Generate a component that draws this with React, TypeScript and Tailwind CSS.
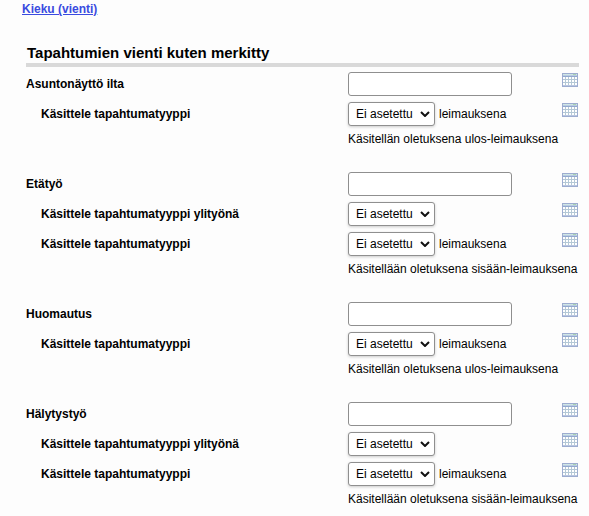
import { useId } from 'react';

type Field = { label: string; suffix?: string };
type Group = { title: string; fields: Field[]; hint: string };

const overtime: Field = { label: 'Käsittele tapahtumatyyppi ylityönä' };
const stamp: Field = { label: 'Käsittele tapahtumatyyppi', suffix: 'leimauksena' };
const hintOut = 'Käsitellän oletuksena ulos-leimauksena';
const hintIn = 'Käsitellään oletuksena sisään-leimauksena';

const groups: Group[] = [
  { title: 'Asuntonäyttö ilta', fields: [stamp], hint: hintOut },
  { title: 'Etätyö', fields: [overtime, stamp], hint: hintIn },
  { title: 'Huomautus', fields: [stamp], hint: hintOut },
  { title: 'Hälytystyö', fields: [overtime, stamp], hint: hintIn },
];

function CalendarButton() {
  return (
    <button type="button" aria-label="Kalenteri" className="mt-1 h-[14px] w-4 self-start">
      <svg width="16" height="14" viewBox="0 0 16 14" shapeRendering="crispEdges" className="block">
        <rect width="16" height="14" fill="#9dacd0" />
        <rect x="1" y="1" width="14" height="1" fill="#cfe6e4" />
        <rect x="1" y="2" width="14" height="1" fill="#b9cbe2" />
        <rect x="11" y="1" width="3" height="1" fill="#a9d3b4" />
        <rect x="1" y="3" width="14" height="1" fill="#93a9cf" />
        <rect x="1" y="4" width="14" height="9" fill="#ffffff" />
        <path d="M3.5 4v9M6.5 4v9M9.5 4v9M12.5 4v9M1 6.5h14M1 9.5h14" stroke="#b4c8d6" />
        <path d="M1 12.5h14" stroke="#b9c6e0" />
      </svg>
    </button>
  );
}

const rowClass = 'grid h-[30px] grid-cols-[322px_1fr_16px] items-center';

function TextRow({ label }: { label: string }) {
  const id = useId();
  return (
    <div className={rowClass}>
      <label htmlFor={id} className="font-bold">{label}</label>
      <input
        id={id}
        type="text"
        className="h-6 w-[164px] rounded-[3px] border border-[#8f8f8f] bg-white px-2 outline-none"
      />
      <CalendarButton />
    </div>
  );
}

function SelectRow({ label, suffix }: Field) {
  const id = useId();
  return (
    <div className={rowClass}>
      <label htmlFor={id} className="pl-[15px] font-bold">{label}</label>
      <div className="flex items-center gap-1">
        <div className="grid items-center">
          <select
            id={id}
            className="col-start-1 row-start-1 h-6 w-[87px] appearance-none rounded-[3px] border border-[#8f8f8f] bg-white pl-[7px] shadow-[0_1px_3px_rgba(0,0,0,0.2)] outline-none"
          >
            <option>Ei asetettu</option>
          </select>
          <svg
            width="10"
            height="6"
            viewBox="0 0 10 6"
            fill="none"
            stroke="#111"
            strokeWidth="2"
            className="pointer-events-none col-start-1 row-start-1 mr-[5px] justify-self-end"
          >
            <path d="M1 1l4 4 4-4" />
          </svg>
        </div>
        {suffix && <span>{suffix}</span>}
      </div>
      <CalendarButton />
    </div>
  );
}

export default function App() {
  return (
    <main className="min-h-screen bg-[#fdfdfd] pr-[10px] pl-[22px] font-['Liberation_Sans',Arial,sans-serif] text-[12px] leading-5 text-black">
      <a href="#kieku" className="block w-fit leading-[18px] font-bold text-[#3a4be0] underline">Kieku (vienti)</a>
      <section className="pt-6 pl-1">
        <h2 className="border-b-4 border-[#d9d9d9] pl-px text-[15px] leading-[21px] font-bold">
          Tapahtumien vienti kuten merkitty
        </h2>
        <form className="flex flex-col gap-5 pt-[2px]">
          {groups.map((group) => (
            <div key={group.title} className="pr-px">
              <TextRow label={group.title} />
              {group.fields.map((field) => (
                <SelectRow key={field.label} {...field} />
              ))}
              <p className="pl-[322px] whitespace-nowrap">{group.hint}</p>
            </div>
          ))}
        </form>
      </section>
    </main>
  );
}
